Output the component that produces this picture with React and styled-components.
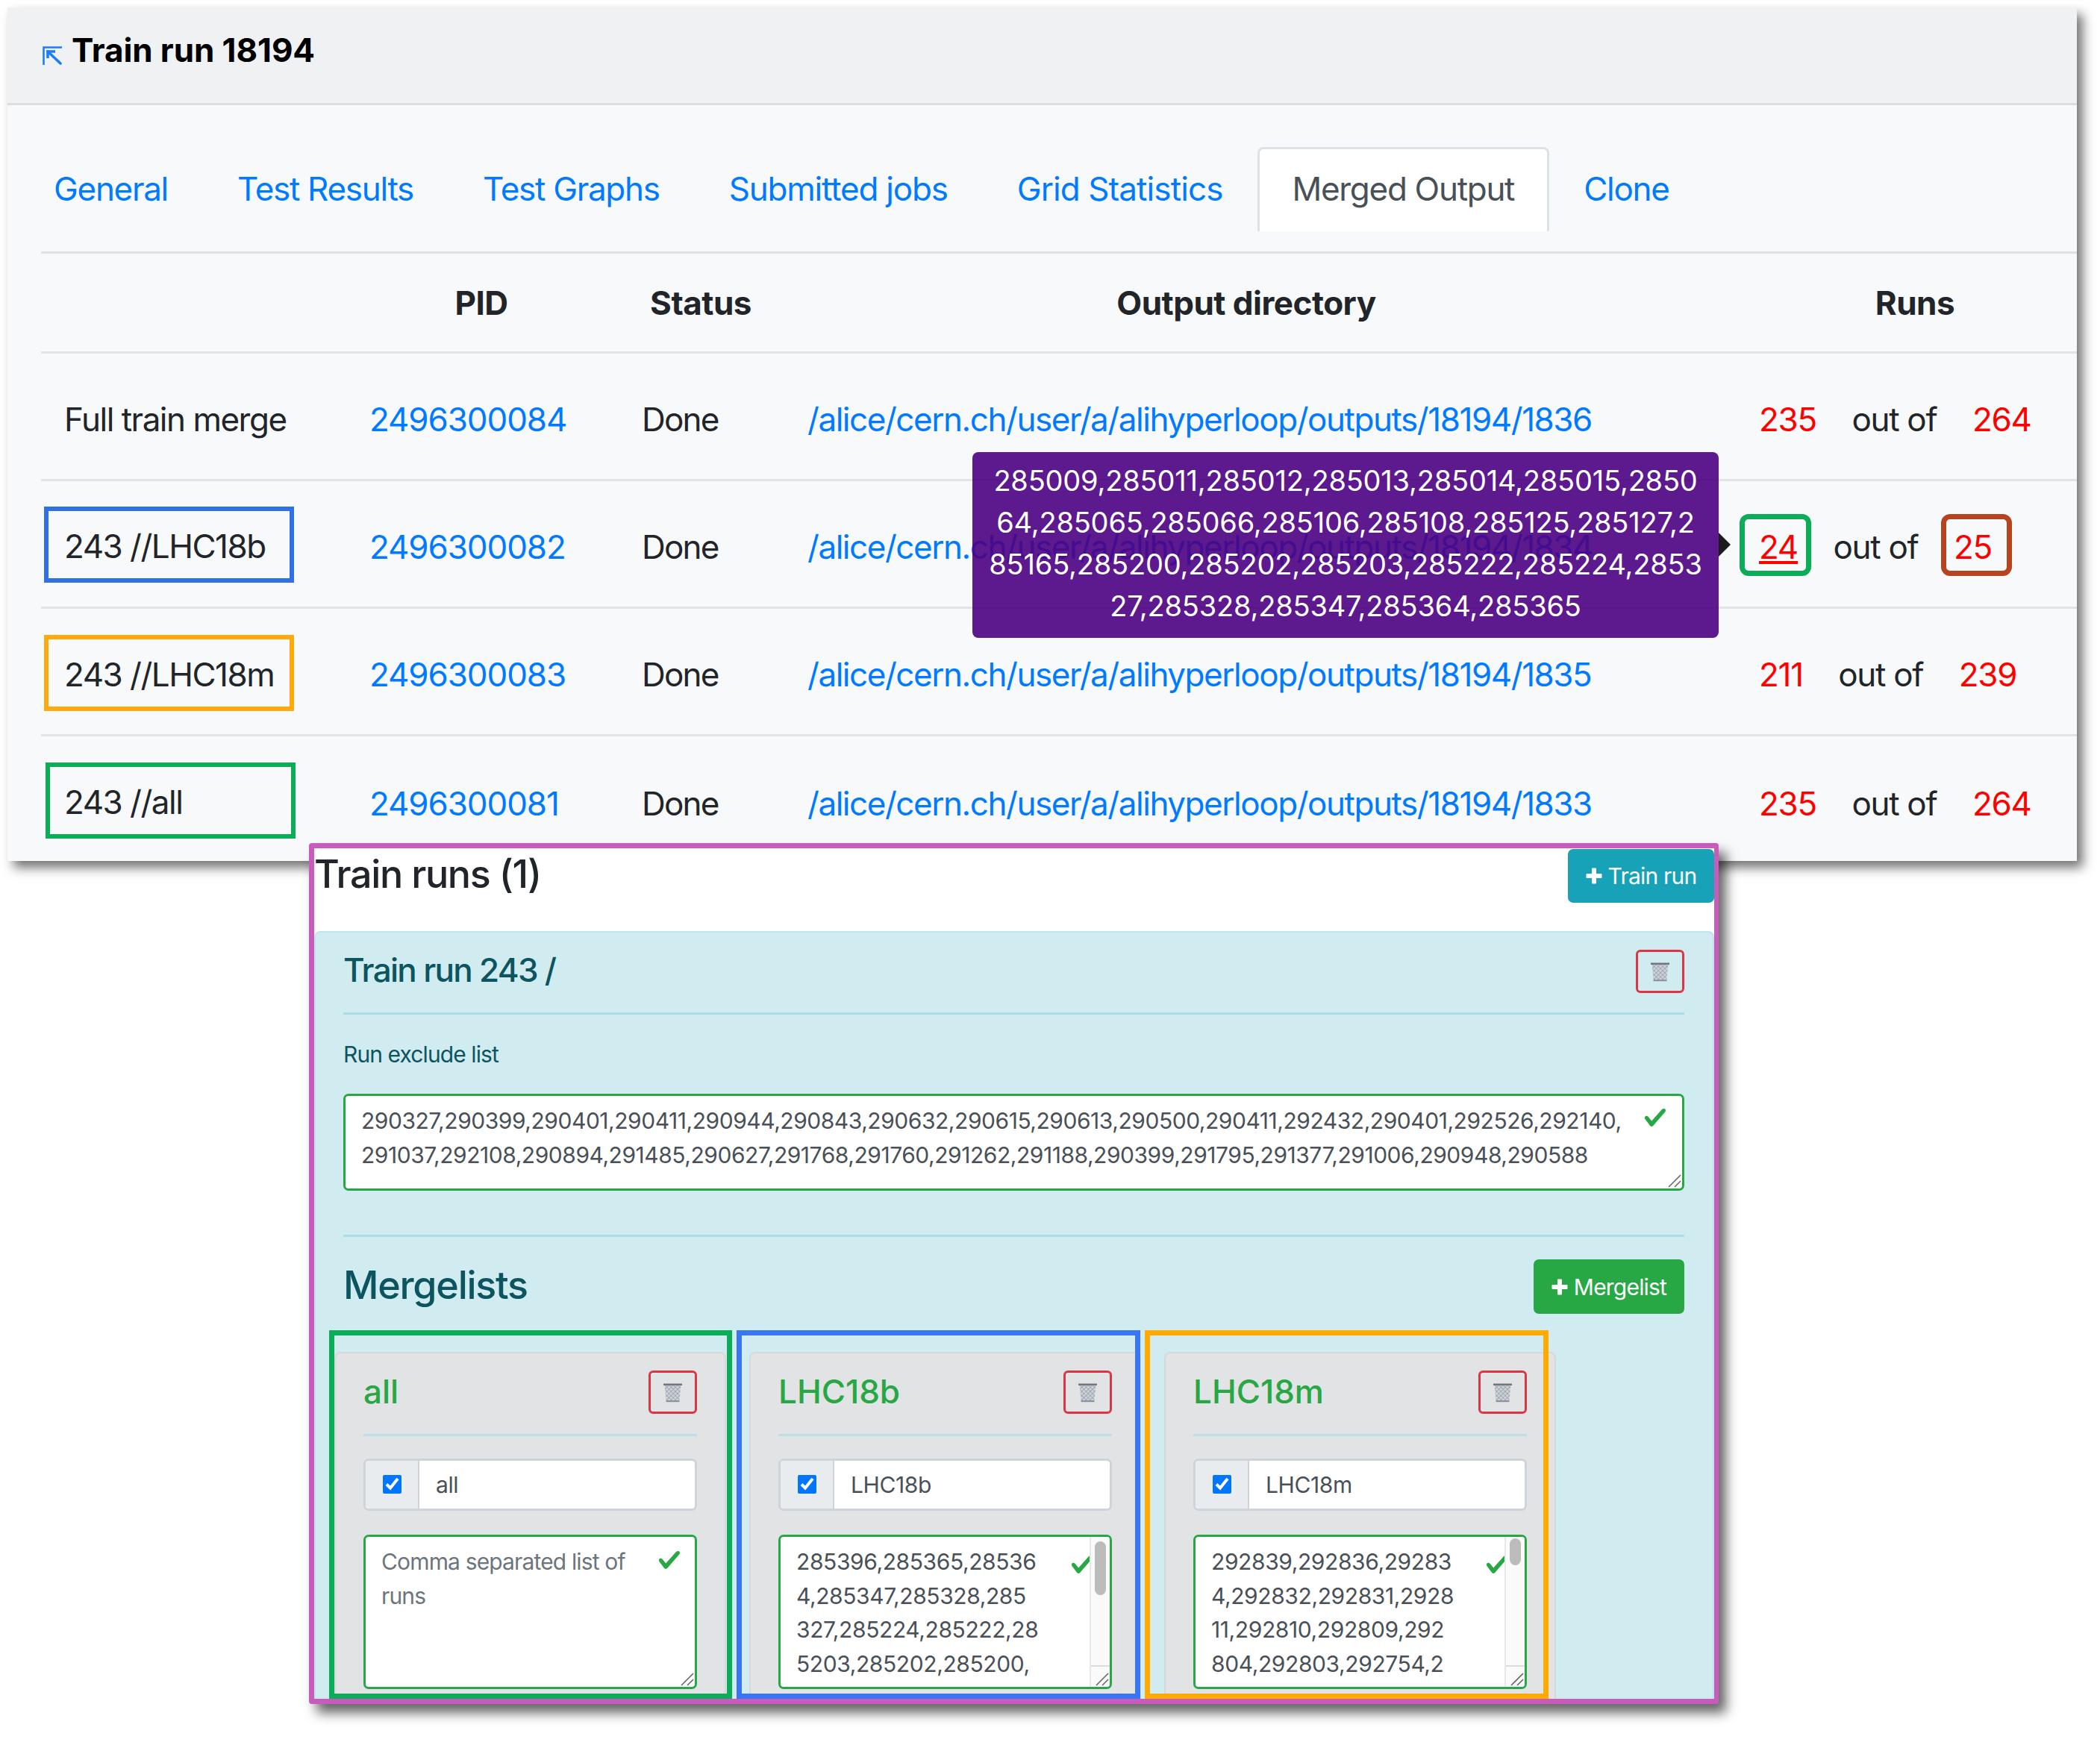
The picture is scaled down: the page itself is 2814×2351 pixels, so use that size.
import React, { useId } from "react";
import styled, { createGlobalStyle } from "styled-components";

const Global = createGlobalStyle`
  html, body { margin: 0; padding: 0; background: #fff; }
  body { font-family: Inter, "Liberation Sans", sans-serif; color: #212529; }
  * { box-sizing: border-box; }
`;

const Page = styled.div`
  width: 2814px;
  height: 2351px;
  padding: 10px 0 0 10px;
  overflow: hidden;
`;

const TopPanel = styled.section`
  position: relative;
  width: 2773px;
  height: 1144px;
  background: #f8f9fb;
  box-shadow: 8px 9px 14px rgba(0, 0, 0, 0.55);
`;

const Header = styled.header`
  height: 131px;
  background: #f0f1f3;
  border-bottom: 3px solid #dcdde0;
  display: flex;
  align-items: flex-start;
  padding: 32px 0 0 47px;
  gap: 12px;
`;

const Title = styled.h1`
  margin: 0;
  font-size: 44px;
  letter-spacing: -0.1px;
  line-height: 50px;
  font-weight: 700;
  color: #000;
`;

const BackIcon = styled.svg`
  width: 27px;
  height: 25px;
  margin-top: 20px;
`;

const Tabs = styled.nav`
  display: flex;
  margin: 0 0 0 45px;
  padding-top: 56px;
  height: 199px;
  border-bottom: 3px solid #dfe2e7;
  align-items: flex-start;
`;

const Tab = styled.a`
  height: 113px;
  padding: 0 43.5px;
  font-size: 44px;
  line-height: 106px;
  letter-spacing: ${(p) => p.$track}px;
  color: ${(p) => (p.$active ? "#495057" : "#007bff")};
  background: ${(p) => (p.$active ? "#fff" : "transparent")};
  border: 3px solid ${(p) => (p.$active ? "#dee2e6" : "transparent")};
  border-bottom: none;
  border-radius: 8px 8px 0 0;
  white-space: nowrap;
  &:first-child {
    padding-left: 14px;
  }
`;

const HeadRow = styled.div`
  display: grid;
  grid-template-columns: 440px 300px 288px 1266px 434px;
  margin-left: 45px;
  height: 134px;
  border-bottom: 3px solid #e1e3e7;
  align-items: center;
`;

const HeadCell = styled.div`
  font-size: 44px;
  letter-spacing: -0.5px;
  font-weight: 700;
  text-align: center;
  padding-right: ${(p) => p.$pad || 0}px;
`;

const Row = styled.div`
  display: grid;
  grid-template-columns: 440px 365px 222px 1275px auto;
  margin-left: 45px;
  height: 171px;
  border-bottom: ${(p) => (p.$last ? "none" : "3px solid #e1e3e7")};
  align-items: center;
  font-size: 44px;
  letter-spacing: -1.3px;
`;

const Label = styled.div`
  margin-left: ${(p) => (p.$color ? p.$inset : 31)}px;
  letter-spacing: -1.5px;
  ${(p) =>
    p.$color
      ? `border: 6px solid ${p.$color}; width: 335px; height: 102px; margin-top: ${p.$drop}px; padding: 4px 0 0 ${25 - p.$inset}px; display: flex; align-items: center;`
      : "margin-top: 8px;"}
`;

const Status = styled.span`
  margin-top: 8px;
  letter-spacing: -1.8px;
`;

const Link = styled.a`
  color: #007bff;
  white-space: nowrap;
  margin-top: 8px;
  letter-spacing: ${(p) => p.$track}px;
`;

const Runs = styled.div`
  display: flex;
  gap: 47.5px;
  white-space: nowrap;
  margin-top: 8px;
`;

const Count = styled.span`
  position: relative;
  color: #ff0000;
  text-decoration: ${(p) => (p.$under ? "underline" : "none")};
  &::after {
    content: "";
    display: ${(p) => (p.$ring ? "block" : "none")};
    position: absolute;
    top: -17px;
    bottom: -12px;
    left: ${(p) => p.$l}px;
    right: ${(p) => p.$r}px;
    border: 7px solid ${(p) => p.$ring};
    border-radius: 12px;
  }
`;

const Tooltip = styled.div`
  position: absolute;
  left: 1293px;
  top: 596px;
  width: 1000px;
  height: 249px;
  background: rgba(75, 0, 130, 0.9);
  border-radius: 8px;
  color: #fff;
  text-align: center;
  font-size: 38px;
  letter-spacing: -0.2px;
  line-height: 56px;
  padding-top: 10px;
  white-space: nowrap;
  &::after {
    content: "";
    position: absolute;
    left: 100%;
    top: 108px;
    border-style: solid;
    border-width: 16px 0 16px 16px;
    border-color: transparent transparent transparent #1c1c1c;
  }
`;

const Line = styled.div``;

const LowerPanel = styled.section`
  position: relative;
  margin: -24px 0 0 404px;
  width: 1889px;
  height: 1154px;
  background: #fff;
  border: 7px solid #c95bbd;
  border-right-width: 6px;
  border-radius: 4px;
  box-shadow: 10px 12px 16px rgba(0, 0, 0, 0.6);
  overflow: hidden;
`;

const LowerHead = styled.div`
  height: 111px;
  display: flex;
  justify-content: space-between;
  align-items: flex-start;
`;

const LowerTitle = styled.h2`
  margin: 0;
  font-size: 52px;
  letter-spacing: -1.4px;
  line-height: 70px;
  font-weight: 500;
`;

const ActionButton = styled.div`
  display: flex;
  align-items: center;
  justify-content: center;
  gap: 8px;
  width: ${(p) => p.$w}px;
  height: ${(p) => p.$h}px;
  margin-top: ${(p) => p.$top || 0}px;
  background: ${(p) => p.$bg};
  color: #fff;
  border-radius: 7px;
  font-size: 30px;
  letter-spacing: -0.8px;
`;

const PlusIcon = styled.svg`
  width: 22px;
  height: 22px;
  fill: #fff;
`;

const Alert = styled.div`
  background: #d1ecf1;
  border: 2px solid #bee5eb;
  border-bottom: none;
  border-radius: 8px 8px 0 0;
  padding: 23px 38px 0 37px;
  height: 1100px;
  color: #0c5460;
`;

const RunHead = styled.div`
  display: flex;
  justify-content: space-between;
  align-items: center;
  height: 58px;
`;

const RunTitle = styled.h3`
  margin: 0 0 5px;
  font-size: 44px;
  letter-spacing: -1.7px;
  font-weight: 500;
`;

const DeleteButton = styled.div`
  width: 65px;
  height: 58px;
  border: 3px solid #dc3545;
  border-radius: 6px;
  display: flex;
  align-items: center;
  justify-content: center;
`;

const Divider = styled.div`
  height: 3px;
  background: ${(p) => p.$color || "#abdde5"};
  margin-top: ${(p) => p.$top}px;
`;

const FieldLabel = styled.div`
  font-size: 30px;
  letter-spacing: -0.9px;
  line-height: 46px;
  margin-top: 30px;
`;

const TextBox = styled.div`
  position: relative;
  margin-top: ${(p) => p.$top}px;
  height: ${(p) => p.$h}px;
  background: #fff;
  border: 3px solid #28a745;
  border-radius: 7px;
  padding: 11px 21px;
  font-size: 30px;
  letter-spacing: ${(p) => (p.$muted ? "-0.85px" : p.$wide ? "-0.46px" : "-0.4px")};
  line-height: 45.5px;
  color: ${(p) => (p.$muted ? "#6c757d" : "#495057")};
  white-space: nowrap;
  overflow: hidden;
`;

const CheckIcon = styled.svg`
  position: absolute;
  right: ${(p) => p.$r}px;
  top: ${(p) => p.$t}px;
  width: ${(p) => p.$size}px;
  height: ${(p) => p.$size}px;
  fill: #28a745;
`;

const Resizer = styled.svg`
  position: absolute;
  right: 1px;
  bottom: 1px;
  width: 20px;
  height: 20px;
  stroke: #666;
  stroke-width: 1.6;
`;

const ScrollTrack = styled.div`
  position: absolute;
  right: 0;
  top: 0;
  bottom: 0;
  width: 27px;
  background: #fafafa;
  border-left: 2px solid #e8e8e8;
  &::after {
    content: "";
    position: absolute;
    left: 0;
    right: 0;
    bottom: 27px;
    height: 2px;
    background: #dcdcdc;
  }
`;

const ScrollThumb = styled.div`
  position: absolute;
  left: 5px;
  right: 5px;
  top: ${(p) => p.$t}px;
  height: ${(p) => p.$h}px;
  border-radius: 8px;
  background: #bcbcbc;
`;

const MergeHead = styled.div`
  display: flex;
  justify-content: space-between;
  align-items: center;
  height: 73px;
  margin-top: 30px;
`;

const MergeTitle = styled.h3`
  margin: 0 0 5px;
  font-size: 52px;
  letter-spacing: -1.25px;
  font-weight: 500;
`;

const Cards = styled.div`
  display: flex;
  gap: 31px;
  margin: 51px 0 0 -12px;
`;

const Card = styled.div`
  position: relative;
  width: 525px;
  height: 520px;
  background: #e2e3e5;
  border: 2px solid #d6d8db;
  border-radius: 8px;
  padding: 23px 37px;
`;

const CardFrame = styled.div`
  position: absolute;
  top: -31px;
  left: ${(p) => p.$l}px;
  width: ${(p) => p.$w}px;
  height: 494px;
  border: 7px solid ${(p) => p.$color};
  pointer-events: none;
`;

const CardHead = styled.div`
  display: flex;
  justify-content: space-between;
  align-items: center;
  height: 58px;
`;

const CardTitle = styled.h4`
  margin: 0 0 3px;
  font-size: 44px;
  font-weight: 500;
  color: #28a745;
`;

const InputGroup = styled.div`
  display: flex;
  height: 70px;
  margin-top: 30px;
  border: 3px solid #ced4da;
  border-radius: 7px;
  overflow: hidden;
  background: #fff;
  font-size: 30px;
  letter-spacing: -0.4px;
  color: #495057;
`;

const Addon = styled.div`
  width: 72px;
  background: #e9ecef;
  border-right: 2px solid #ced4da;
  display: flex;
  align-items: center;
  justify-content: center;
`;

const Check = styled.input`
  width: 25px;
  height: 25px;
  margin: 0 0 2px;
  accent-color: #0075ff;
`;

const InputText = styled.div`
  padding-left: 22px;
  line-height: 64px;
`;

function Plus() {
  return (
    <PlusIcon viewBox="0 0 22 22">
      <path d="M8 1.500a1 1 0 0 1 1-1h4a1 1 0 0 1 1 1V8h6.500a1 1 0 0 1 1 1v4a1 1 0 0 1-1 1H14v6.500a1 1 0 0 1-1 1H9a1 1 0 0 1-1-1V14H1.500a1 1 0 0 1-1-1V9a1 1 0 0 1 1-1H8z" />
    </PlusIcon>
  );
}

function Trash() {
  const id = useId();
  return (
    <svg width="27" height="27" viewBox="0 0 27 27">
      <defs>
        <pattern id={id} width="4" height="4" patternUnits="userSpaceOnUse" patternTransform="rotate(45)">
          <rect width="4" height="4" fill="#cfd3d8" />
          <path d="M0 0h4M0 0v4" stroke="#7f8a96" strokeWidth="1.100" />
        </pattern>
      </defs>
      <path d="M2.500 3h22l-2.300 22.500H4.800z" fill={`url(#${id})`} />
      <path d="M1 1.500h25V4H1z" fill="#6f7780" />
      <path d="M4.600 24h17.800v2.200H4.600z" fill="#8b949d" />
    </svg>
  );
}

function ValidCheck({ r, t, size = 32 }) {
  return (
    <CheckIcon $r={r} $t={t} $size={size} viewBox="0 0 8 8">
      <path d="M2.300 6.730L.6 4.530c-.4-1.040.46-1.400 1.100-.8l1.100 1.400 3.400-3.800c.6-.63 1.600-.27 1.200.7l-4 4.600c-.43.5-.8.4-1.100.1z" />
    </CheckIcon>
  );
}

function Grip() {
  return (
    <Resizer viewBox="0 0 20 20">
      <path d="M3 19L19 3M11 19L19 11" />
    </Resizer>
  );
}

const tabs = [
  { name: "General", track: -1.3 },
  { name: "Test Results", track: -1.3 },
  { name: "Test Graphs", track: -1.3 },
  { name: "Submitted jobs", track: -1.2 },
  { name: "Grid Statistics", track: -0.9 },
  { name: "Merged Output", track: -1.3 },
  { name: "Clone", track: -1.3 },
];

const rows = [
  { label: "Full train merge", pid: "2496300084", dir: "1836", a: "235", b: "264" },
  { label: "243 //LHC18b", color: "#2f6fe8", inset: 4, drop: 2, pid: "2496300082", dir: "1834", a: "24", b: "25", ring: true },
  { label: "243 //LHC18m", color: "#ffa90a", inset: 4, drop: 4, pid: "2496300083", dir: "1835", a: "211", b: "239" },
  { label: "243 //all", color: "#0bad58", inset: 6, drop: 0, pid: "2496300081", dir: "1833", a: "235", b: "264", last: true },
];

const tipLines = [
  "285009,285011,285012,285013,285014,285015,2850",
  "64,285065,285066,285106,285108,285125,285127,2",
  "85165,285200,285202,285203,285222,285224,2853",
  "27,285328,285347,285364,285365",
];

const excludeLines = [
  "290327,290399,290401,290411,290944,290843,290632,290615,290613,290500,290411,292432,290401,292526,292140,",
  "291037,292108,290894,291485,290627,291768,291760,291262,291188,290399,291795,291377,291006,290948,290588",
];

const cards = [
  { name: "all", frame: "#0bad58", l: -9, w: 540, muted: true, lines: ["Comma separated list of", "runs"] },
  {
    name: "LHC18b",
    frame: "#3a75f6",
    l: -19,
    w: 541,
    thumb: [6, 72],
    lines: ["285396,285365,28536", "4,285347,285328,285", "327,285224,285222,28", "5203,285202,285200,"],
  },
  {
    name: "LHC18m",
    frame: "#ffaa00",
    l: -28,
    w: 541,
    thumb: [2, 36],
    lines: ["292839,292836,29283", "4,292832,292831,2928", "11,292810,292809,292", "804,292803,292754,2"],
  },
];

export default function App() {
  return (
    <Page>
      <Global />
      <TopPanel>
        <Header>
          <BackIcon viewBox="0 0 27 25">
            <g fill="none" stroke="#1a7efb">
              <path d="M1.500 25V1.500H26" strokeWidth="2.600" />
              <path d="M7 7L24 23" strokeWidth="3.600" strokeLinecap="round" />
              <path d="M7 16V7H17" strokeWidth="3.600" />
            </g>
          </BackIcon>
          <Title>Train run 18194</Title>
        </Header>
        <Tabs>
          {tabs.map((t) => (
            <Tab key={t.name} $track={t.track} $active={t.name === "Merged Output"}>
              {t.name}
            </Tab>
          ))}
        </Tabs>
        <HeadRow>
          <span />
          <HeadCell>PID</HeadCell>
          <HeadCell>Status</HeadCell>
          <HeadCell $pad={92}>Output directory</HeadCell>
          <HeadCell>Runs</HeadCell>
        </HeadRow>
        {rows.map((r) => (
          <Row key={r.pid} $last={r.last}>
            <Label $color={r.color} $inset={r.inset} $drop={r.drop}>
              {r.label}
            </Label>
            <Link $track={-1.1}>{r.pid}</Link>
            <Status>Done</Status>
            <Link $track={-1.45}>/alice/cern.ch/user/a/alihyperloop/outputs/18194/{r.dir}</Link>
            <Runs>
              <Count $under={r.ring} $ring={r.ring ? "#0bad58" : null} $l={-26} $r={-18}>
                {r.a}
              </Count>
              <span>out of</span>
              <Count $ring={r.ring ? "#b8441f" : null} $l={-17} $r={-27}>
                {r.b}
              </Count>
            </Runs>
          </Row>
        ))}
        <Tooltip>
          {tipLines.map((l) => (
            <Line key={l}>{l}</Line>
          ))}
        </Tooltip>
      </TopPanel>
      <LowerPanel>
        <LowerHead>
          <LowerTitle>Train runs (1)</LowerTitle>
          <ActionButton $w={196} $h={72} $top={1} $bg="#17a2b8">
            <Plus />
            Train run
          </ActionButton>
        </LowerHead>
        <Alert>
          <RunHead>
            <RunTitle>Train run 243 /</RunTitle>
            <DeleteButton>
              <Trash />
            </DeleteButton>
          </RunHead>
          <Divider $top={26} />
          <FieldLabel>Run exclude list</FieldLabel>
          <TextBox $top={30} $h={130} $wide>
            {excludeLines.map((l) => (
              <Line key={l}>{l}</Line>
            ))}
            <ValidCheck r={20} t={13} />
            <Grip />
          </TextBox>
          <Divider $top={59} />
          <MergeHead>
            <MergeTitle>Mergelists</MergeTitle>
            <ActionButton $w={202} $h={73} $bg="#28a745">
              <Plus />
              Mergelist
            </ActionButton>
          </MergeHead>
          <Cards>
            {cards.map((c) => (
              <Card key={c.name}>
                <CardFrame $color={c.frame} $l={c.l} $w={c.w} />
                <CardHead>
                  <CardTitle>{c.name}</CardTitle>
                  <DeleteButton>
                    <Trash />
                  </DeleteButton>
                </CardHead>
                <Divider $top={27} $color="#bfdfe8" />
                <InputGroup>
                  <Addon>
                    <Check type="checkbox" checked readOnly />
                  </Addon>
                  <InputText>{c.name}</InputText>
                </InputGroup>
                <TextBox $top={32} $h={207} $muted={c.muted}>
                  {c.lines.map((l) => (
                    <Line key={l}>{l}</Line>
                  ))}
                  <ValidCheck r={c.thumb ? 21 : 18} t={c.thumb ? 21 : 15} />
                  {c.thumb && (
                    <ScrollTrack>
                      <ScrollThumb $t={c.thumb[0]} $h={c.thumb[1]} />
                    </ScrollTrack>
                  )}
                  <Grip />
                </TextBox>
              </Card>
            ))}
          </Cards>
        </Alert>
      </LowerPanel>
    </Page>
  );
}
